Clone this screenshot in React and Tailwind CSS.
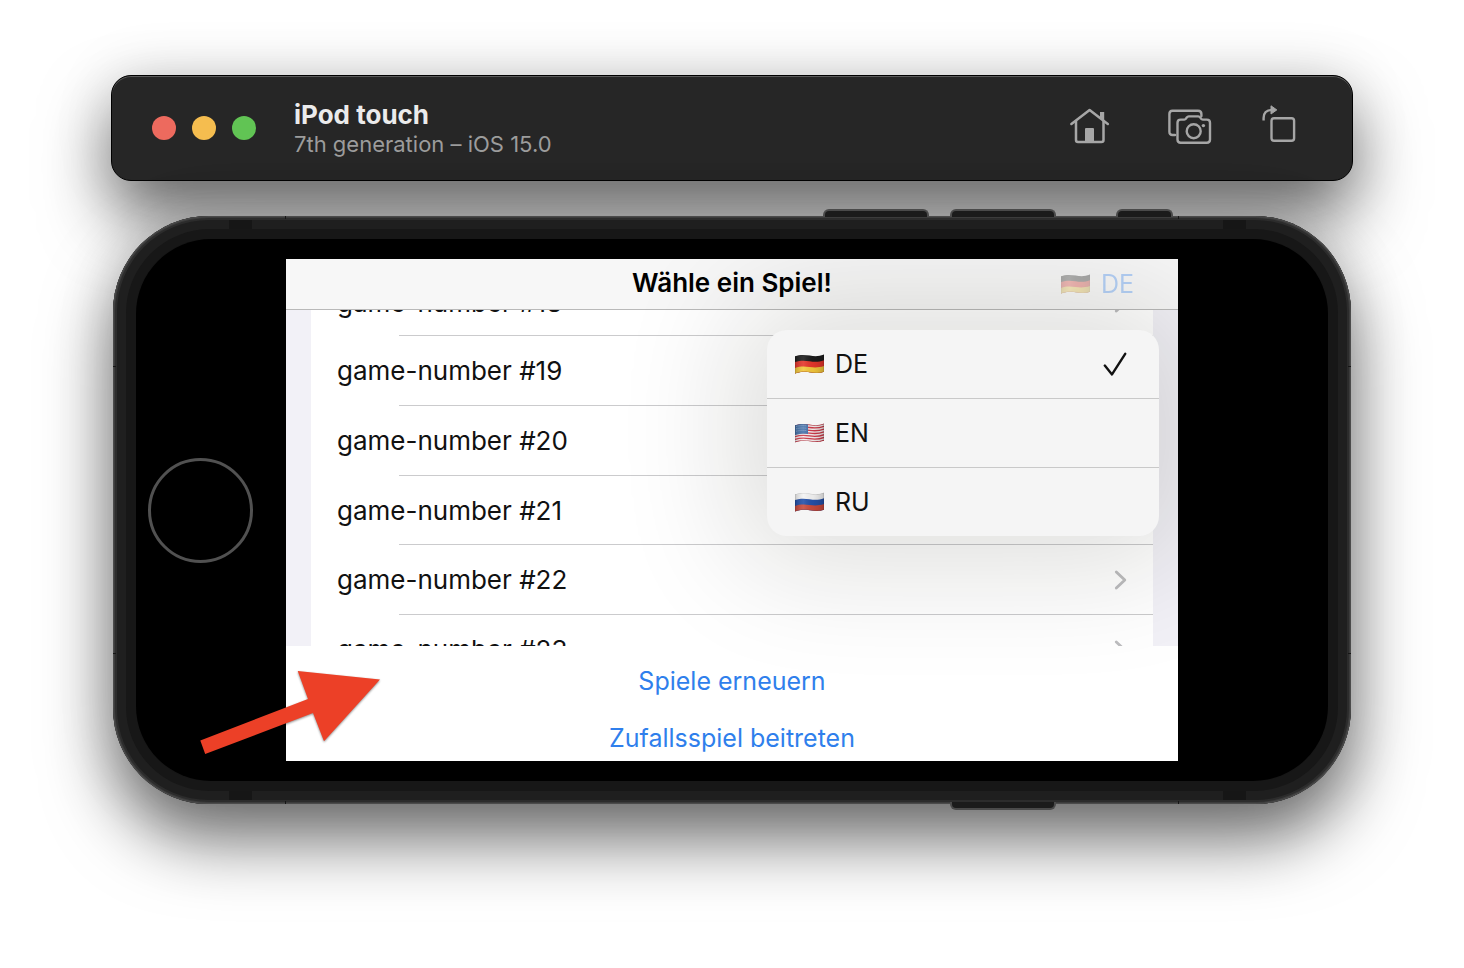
import React from "react";

const games = [18, 19, 20, 21, 22, 23];
const languages = ["DE", "EN", "RU"];
const wave = "M0 2.2 C5 .6 9 .6 14.5 1.6 S24 2.6 29 .6 V17.8 C24 19.6 20 19 14.5 18.2 S5 17.6 0 19.6 Z";

function Flag({ code }) {
  const id = React.useId();
  const stripes = {
    DE: ["#1c1c1c", "#e5352b", "#f3c73b"],
    RU: ["#f4f4f4", "#2450a8", "#c94a3b"],
  }[code];
  return (
    <svg width="29" height="20" viewBox="0 0 29 20" aria-hidden="true" className="shrink-0">
      <defs>
        <clipPath id={id + "c"}>
          <path d={wave} />
        </clipPath>
        <linearGradient id={id + "g"}>
          <stop offset="0" stopColor="#000" stopOpacity=".18" />
          <stop offset=".3" stopColor="#fff" stopOpacity=".1" />
          <stop offset=".62" stopColor="#000" stopOpacity=".04" />
          <stop offset=".8" stopColor="#000" stopOpacity=".1" />
          <stop offset="1" stopColor="#000" stopOpacity=".2" />
        </linearGradient>
      </defs>
      <g clipPath={"url(#" + id + "c)"}>
        {stripes ? (
          <>
            <rect width="29" height="20" fill={stripes[0]} />
            <path d="M0 8 C5 6.4 9 6.4 14.5 7.2 S24 8 29 6.2 V20 H0 Z" fill={stripes[1]} />
            <path d="M0 14 C5 12.2 9 12.2 14.5 13 S24 13.6 29 12 V20 H0 Z" fill={stripes[2]} />
          </>
        ) : (
          <>
            <rect width="29" height="20" fill="#f6eeee" />
            {[2.4, 5.2, 8, 10.8, 13.6, 16.4, 19.2].map((y) => (
              <path
                key={y}
                d={`M0 ${y} c5 -1.6 9 -1.6 14.5 -.7 s9.5 .7 14.5 -1.2`}
                fill="none"
                stroke="#cf3b4a"
                strokeWidth="1.35"
              />
            ))}
            <path d="M0 0 H13 V11 C9 10.4 5 10.8 0 12 Z" fill="#4673ab" />
            {[3.4, 5.8, 8.2].map((y) => (
              <path
                key={y}
                d={`M1.4 ${y} c4 -1 7 -1 10.6 -.5`}
                fill="none"
                stroke="#b9cbe2"
                strokeWidth=".8"
                strokeDasharray=".8 1.3"
              />
            ))}
          </>
        )}
        <path d={wave} fill={"url(#" + id + "g)"} stroke="#000" strokeOpacity=".2" strokeWidth=".8" />
      </g>
    </svg>
  );
}

function Toolbar() {
  return (
    <header className="flex h-[106px] items-center rounded-[20px] border border-black bg-[#262626] pr-14 pl-10 shadow-[inset_0_1px_0_#5a5a5a,0_36px_68px_rgba(0,0,0,0.56),0_0_60px_rgba(0,0,0,0.12)]">
      <div className="flex gap-4">
        <button aria-label="Close" className="size-6 rounded-full bg-[#ed6a5e]" />
        <button aria-label="Minimize" className="size-6 rounded-full bg-[#f5bd4f]" />
        <button aria-label="Zoom" className="size-6 rounded-full bg-[#61c454]" />
      </div>
      <div className="ml-[38px] flex-1 pt-0.5">
        <h1 className="text-[26px] leading-[30px] font-bold text-[#ebebeb]">iPod touch</h1>
        <p className="text-[22px] leading-[28px] text-[#9c9c9c]">7th generation – iOS 15.0</p>
      </div>
      <div className="flex h-full items-start pt-[29px] text-[#a6a6a6]">
        <button aria-label="Home" className="mt-[3px]">
          <svg width="40" height="36" viewBox="0 0 40 36" fill="none" stroke="currentColor" strokeWidth="2.5" strokeLinecap="round" strokeLinejoin="round">
            <path d="M1.4 16 L19.6 2 L37.8 16" />
            <path d="M6 13.2 V32 Q6 34 8 34 H31.5 Q33.5 34 33.5 32 V13.2" />
            <path d="M30 4 H34.2 V13 L30 9.8 Z" fill="currentColor" stroke="none" />
            <path d="M15 34 V21 Q15 20 16 20 H23 Q24 20 24 21 V34 Z" fill="currentColor" stroke="none" />
          </svg>
        </button>
        <button aria-label="Screenshot" className="mt-[3px] ml-[58px]">
          <svg width="44" height="37" viewBox="0 0 44 37" fill="none" stroke="currentColor" strokeWidth="2.4" strokeLinecap="round" strokeLinejoin="round">
            <path d="M7 27 H4.5 Q1.4 27 1.4 23.7 V6 Q1.4 2.7 4.5 2.7 H30 Q33.4 2.7 33.4 6 V8" />
            <path d="M12.7 11.6 H16.2 Q17.4 11.6 18 10.7 L18.8 9.4 Q19.5 8.4 20.8 8.4 H30.2 Q31.5 8.4 32.2 9.4 L33 10.7 Q33.6 11.6 34.8 11.6 H38.8 Q42 11.6 42 14.8 V31.6 Q42 34.8 38.8 34.8 H12.7 Q9.5 34.8 9.5 31.6 V14.8 Q9.5 11.6 12.7 11.6 Z" />
            <circle cx="25.7" cy="23.2" r="7" />
            <circle cx="35.4" cy="17.6" r="1.7" fill="currentColor" stroke="none" />
          </svg>
        </button>
        <button aria-label="Rotate" className="ml-[50px]">
          <svg width="34" height="38" viewBox="0 0 34 38" fill="none" stroke="currentColor" strokeWidth="2.4">
            <rect x="9.5" y="13.2" width="22.6" height="22.6" rx="2.6" />
            <path d="M1.6 15.6 V13 Q1.6 5.2 10 4.9" />
            <path d="M9 .8 L14.8 4.9 L9 9 Z" fill="currentColor" strokeWidth="1" strokeLinejoin="round" />
          </svg>
        </button>
      </div>
    </header>
  );
}

function GameRow({ number }) {
  return (
    <li className="relative h-[70px] shrink-0 first:h-[66px] nth-4:h-[69px]">
      <button className="flex size-full items-center justify-between px-[26px] text-left">
        <span>game-number #{number}</span>
        <svg width="13" height="20" viewBox="0 0 13 20" fill="none" stroke="#bdbdbf" strokeWidth="2.8" strokeLinecap="round" strokeLinejoin="round" aria-hidden="true">
          <path d="M2.3 2 L10.8 10 L2.3 18" />
        </svg>
      </button>
      <span className="absolute right-0 bottom-0 left-[88px] h-px bg-[#cbcbcd]" />
    </li>
  );
}

function Screen() {
  return (
    <section className="relative min-w-0 flex-1 overflow-hidden bg-white text-[25px] leading-[30px] text-[#111]">
      <div className="grid h-[51px] grid-cols-[1fr_auto_1fr] items-center border-b border-[#b9b9b9] bg-[#f7f7f7]">
        <h2 className="col-start-2 pb-[3px] text-[26px] font-semibold text-black">Wähle ein Spiel!</h2>
        <button className="mr-[44px] flex items-center gap-[11px] justify-self-end text-[#3b8af5] opacity-35">
          <Flag code="DE" />
          <span>DE</span>
        </button>
      </div>
      <div className="h-[336px] overflow-hidden bg-[#f2f1f7] px-[25px] text-[26px]">
        <ul className="-mt-10 flex flex-col bg-white">
          {games.map((n) => (
            <GameRow key={n} number={n} />
          ))}
        </ul>
      </div>
      <div className="flex h-[115px] flex-col items-center gap-[27px] bg-white pt-5 text-[#2f7fec]">
        <button>Spiele erneuern</button>
        <button>Zufallsspiel beitreten</button>
      </div>
      <ul className="absolute top-[71px] right-[19px] w-[392px] divide-y divide-[#c9c9c9] rounded-[20px] bg-[#f5f5f5] shadow-[0_0_120px_30px_rgba(20,20,0,0.14)]">
        {languages.map((code, i) => (
          <li key={code}>
            <button className="flex h-[68px] w-full items-center gap-[11px] pr-8 pl-7">
              <Flag code={code} />
              <span>{code}</span>
              {i === 0 && (
                <svg width="24" height="24" viewBox="0 0 24 24" fill="none" stroke="currentColor" strokeWidth="2.4" strokeLinecap="round" strokeLinejoin="round" className="ml-auto" aria-label="Selected">
                  <path d="M1.8 13.6 L9 22.4 L22.2 1.8" />
                </svg>
              )}
            </button>
          </li>
        ))}
      </ul>
    </section>
  );
}

function Device() {
  return (
    <main className="relative mx-[2px] mt-[35px] rounded-[96px] bg-[#1f1f1f] shadow-[inset_0_0_0_1px_#4b4b4b,inset_0_0_0_2px_#3c3c3c,inset_0_0_0_4px_#2c2c2c,0_36px_68px_rgba(0,0,0,0.56),0_0_60px_rgba(0,0,0,0.12)]">
      <span className="absolute -top-[7px] right-[422px] h-2 w-[106px] rounded-t-md border-2 border-b-0 border-[#4a4a4a] bg-[#1b1b1b]" />
      <span className="absolute -top-[7px] right-[295px] h-2 w-[106px] rounded-t-md border-2 border-b-0 border-[#4a4a4a] bg-[#1b1b1b]" />
      <span className="absolute -top-[7px] right-[178px] h-2 w-[57px] rounded-t-md border-2 border-b-0 border-[#4a4a4a] bg-[#1b1b1b]" />
      <span className="absolute right-[295px] -bottom-[6px] h-2 w-[106px] rounded-b-md border-2 border-t-0 border-[#4a4a4a] bg-[#1b1b1b]" />
      <span className="absolute top-1 left-[116px] h-[9px] w-[23px] bg-[#161616]" />
      <span className="absolute top-1 right-[105px] h-[9px] w-[23px] bg-[#161616]" />
      <span className="absolute bottom-1 left-[116px] h-[9px] w-[23px] bg-[#161616]" />
      <span className="absolute right-[105px] bottom-1 h-[9px] w-[23px] bg-[#161616]" />
      <span className="absolute inset-x-0 top-[150px] h-px border-x-3 border-[#161616]" />
      <span className="absolute inset-x-0 bottom-[150px] h-px border-x-3 border-[#161616]" />
      <span className="absolute inset-y-0 left-[172px] w-px border-y-3 border-[#161616]" />
      <span className="absolute inset-y-0 right-[172px] w-px border-y-3 border-[#161616]" />
      <div className="p-[13px]">
        <div className="rounded-[84px] border-10 border-[#171717] bg-[#171717]">
          <div className="flex items-stretch rounded-[75px] bg-black py-5">
            <div className="flex w-[150px] items-center pl-3">
              <button aria-label="Home button" className="size-[105px] rounded-full border-3 border-[#515151]" />
            </div>
            <Screen />
            <div className="w-[150px]" />
          </div>
        </div>
      </div>
      <svg width="190" height="94" viewBox="0 0 190 94" className="absolute bottom-10 left-[83px] drop-shadow-[0_1px_1px_rgba(0,0,0,0.45)]" aria-hidden="true">
        <path d="M4.3 70.5 L112 29 L101.7 1 L184 9.5 L128 71.2 L117 43 L9.2 84 Z" fill="#ec4027" />
      </svg>
    </main>
  );
}

export default function App() {
  return (
    <div className="min-h-screen bg-white font-[Inter,'Liberation_Sans',sans-serif]">
      <div className="px-[111px] pt-[75px] pb-40">
        <Toolbar />
        <Device />
      </div>
    </div>
  );
}
